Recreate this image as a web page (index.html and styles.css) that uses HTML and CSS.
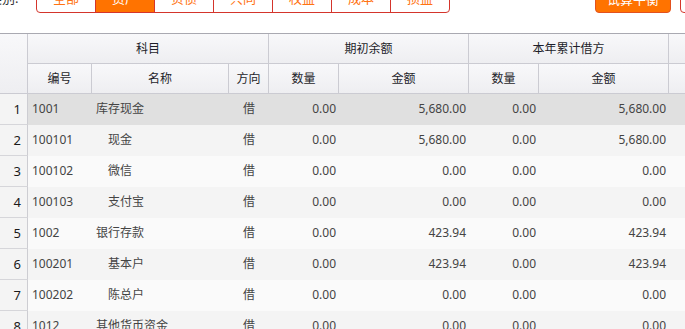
FILE: index.html
```html
<!DOCTYPE html>
<html lang="zh-CN">
<head>
<meta charset="utf-8">
<title>科目期初</title>
<link rel="stylesheet" href="styles.css">
</head>
<body>
<div class="page">
  <div class="toolbar">
    <span class="label">类别:</span>
    <div class="tabs">
      <span class="tab">全部</span>
      <span class="tab active">资产</span>
      <span class="tab">负债</span>
      <span class="tab">共同</span>
      <span class="tab">权益</span>
      <span class="tab">成本</span>
      <span class="tab">损益</span>
    </div>
    <div class="spacer"></div>
    <button class="btn primary">试算平衡</button>
    <button class="btn ghost">导入</button>
  </div>

  <table class="grid">
    <colgroup>
      <col class="c-no"><col class="c-code"><col class="c-name"><col class="c-dir">
      <col class="c-qty"><col class="c-amt"><col class="c-qty"><col class="c-amt">
      <col class="c-qty"><col class="c-amt">
    </colgroup>
    <thead>
      <tr>
        <th class="corner" rowspan="2"></th>
        <th colspan="3">科目</th>
        <th colspan="2">期初余额</th>
        <th colspan="2">本年累计借方</th>
        <th colspan="2">本年累计贷方</th>
      </tr>
      <tr>
        <th>编号</th><th>名称</th><th>方向</th>
        <th>数量</th><th>金额</th>
        <th>数量</th><th>金额</th>
        <th>数量</th><th>金额</th>
      </tr>
    </thead>
    <tbody>
      <tr class="sel"><td class="no">1</td><td>1001</td><td class="name">库存现金</td><td class="dir">借</td><td class="num">0.00</td><td class="num">5,680.00</td><td class="num">0.00</td><td class="num">5,680.00</td><td class="num">0.00</td><td class="num">0.00</td></tr>
      <tr class="even"><td class="no">2</td><td>100101</td><td class="name sub">现金</td><td class="dir">借</td><td class="num">0.00</td><td class="num">5,680.00</td><td class="num">0.00</td><td class="num">5,680.00</td><td class="num">0.00</td><td class="num">0.00</td></tr>
      <tr class="odd"><td class="no">3</td><td>100102</td><td class="name sub">微信</td><td class="dir">借</td><td class="num">0.00</td><td class="num">0.00</td><td class="num">0.00</td><td class="num">0.00</td><td class="num">0.00</td><td class="num">0.00</td></tr>
      <tr class="even"><td class="no">4</td><td>100103</td><td class="name sub">支付宝</td><td class="dir">借</td><td class="num">0.00</td><td class="num">0.00</td><td class="num">0.00</td><td class="num">0.00</td><td class="num">0.00</td><td class="num">0.00</td></tr>
      <tr class="odd"><td class="no">5</td><td>1002</td><td class="name">银行存款</td><td class="dir">借</td><td class="num">0.00</td><td class="num">423.94</td><td class="num">0.00</td><td class="num">423.94</td><td class="num">0.00</td><td class="num">0.00</td></tr>
      <tr class="even"><td class="no">6</td><td>100201</td><td class="name sub">基本户</td><td class="dir">借</td><td class="num">0.00</td><td class="num">423.94</td><td class="num">0.00</td><td class="num">423.94</td><td class="num">0.00</td><td class="num">0.00</td></tr>
      <tr class="odd"><td class="no">7</td><td>100202</td><td class="name sub">陈总户</td><td class="dir">借</td><td class="num">0.00</td><td class="num">0.00</td><td class="num">0.00</td><td class="num">0.00</td><td class="num">0.00</td><td class="num">0.00</td></tr>
      <tr class="even"><td class="no">8</td><td>1012</td><td class="name">其他货币资金</td><td class="dir">借</td><td class="num">0.00</td><td class="num">0.00</td><td class="num">0.00</td><td class="num">0.00</td><td class="num">0.00</td><td class="num">0.00</td></tr>
    </tbody>
  </table>
</div>
</body>
</html>
```

FILE: styles.css
```css
html, body {
  margin: 0;
  padding: 0;
  overflow: hidden;
  background: #ffffff;
}

body {
  font-family: "Noto Sans", "Noto Sans CJK SC", sans-serif;
  font-size: 12px;
  color: #444444;
}

.page {
  width: 868px;
}

/* ---------- toolbar ---------- */
.toolbar {
  display: flex;
  align-items: stretch;
  height: 29px;
  width: 771px;
  margin: -16px 0 20px -11px;
  font-size: 13px;
}

.label {
  width: 47px;
  line-height: 29px;
  color: #333333;
}

.tabs {
  display: flex;
  border: 1px solid #d4352c;
  border-radius: 4px;
  overflow: hidden;
  box-sizing: border-box;
}

.tab {
  width: 58px;
  line-height: 27px;
  text-align: center;
  color: #ff7312;
  border-left: 1px solid #d4352c;
}

.tab:first-child {
  border-left: none;
}

.tab.active {
  background: #ff7300;
  color: #ffffff;
}

.spacer {
  flex: 1;
}

.btn {
  font-family: inherit;
  font-size: 13px;
  height: 29px;
  border-radius: 4px;
  padding: 0;
  box-sizing: border-box;
}

.btn.primary {
  width: 76px;
  background: #ff7300;
  border: 1px solid #e2511f;
  color: #ffffff;
}

.btn.ghost {
  width: 80px;
  margin-left: 9px;
  background: #ffffff;
  border: 1px solid #d4352c;
  color: #ff7312;
}

/* ---------- grid ---------- */
.grid {
  table-layout: fixed;
  border-collapse: separate;
  border-spacing: 0;
  width: 868px;
  border-top: 1px solid #a9a9b1;
}

.c-no { width: 28px; }
.c-code { width: 64px; }
.c-name { width: 137px; }
.c-dir { width: 40px; }
.c-qty { width: 70px; }
.c-amt { width: 130px; }

.grid th {
  font-weight: normal;
  color: #1e1e2a;
  line-height: 29px;
  padding: 0;
  text-align: center;
  background: linear-gradient(#f8f8fa, #eeeef1);
  border-right: 1px solid #cbcbd2;
  border-bottom: 1px solid #cbcbd2;
  white-space: nowrap;
  overflow: hidden;
}

.grid td {
  line-height: 30px;
  padding: 0 3px 0 4px;
  border-bottom: 1px solid transparent;
  white-space: nowrap;
  overflow: hidden;
}

.grid td.no {
  background: #f4f4f4;
  color: #1a1a1a;
  text-align: right;
  padding: 0 6px 0 0;
  font-size: 13px;
  border-right: 1px solid #cdcdd2;
  border-bottom: 1px solid #d6d6da;
}

.grid td.name {
  padding-left: 4px;
}

.grid td.name.sub {
  padding-left: 16px;
}

.grid td.dir {
  text-align: center;
  padding: 0;
}

.grid td.num {
  text-align: right;
}

tr.sel { background: #e0e0e0; }
tr.even { background: #f4f4f4; }
tr.odd { background: #fafafa; }
```
